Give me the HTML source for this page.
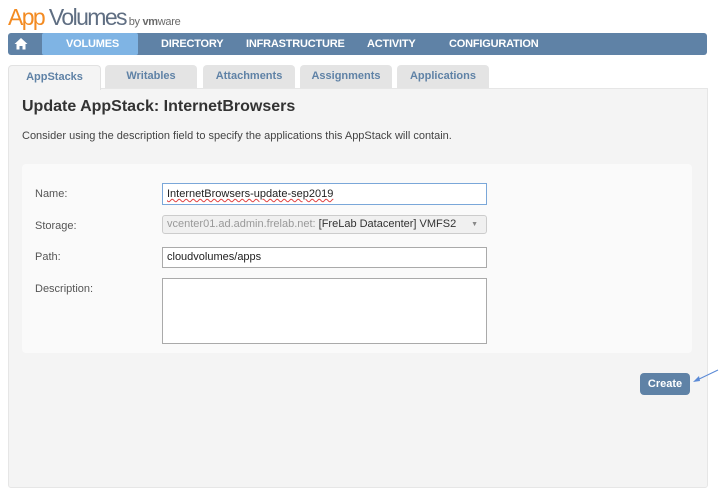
<!DOCTYPE html>
<html><head><style>
body{margin:0;width:719px;height:493px;background:#fff;font-family:"Liberation Sans",sans-serif;position:relative;overflow:hidden}
.a{position:absolute}
.logo{left:8px;top:4px;font-size:23px;letter-spacing:-1.6px}
.nav{left:8px;top:33px;width:699px;height:22px;background:#5f82a6;border-radius:3px}
.nav span{position:absolute;top:5px;color:#fff;font-weight:bold;font-size:11px;letter-spacing:-0.2px}
.tab{top:65px;height:23px;background:#e4e4e4;border-radius:4px 4px 0 0;color:#5f82a6;font-weight:bold;font-size:11px;text-align:center;line-height:23px}
.panel{left:8px;top:88px;width:698px;height:398px;background:#f4f4f4;border:1px solid #e6e6e6;border-radius:0 0 3px 3px}
.lbl{left:35px;font-size:11px;color:#555}
.inp{left:162px;width:325px;border:1px solid #aaa;background:#fff;font-size:11px;color:#222;padding-left:4px;box-sizing:border-box}
</style></head><body>
<div class="a logo"><span style="color:#f38b22">App</span><span style="color:#5f6e82"> Volumes</span><span style="color:#6a6a6a;font-size:11px;letter-spacing:-0.3px"> by <b>vm</b>ware</span></div>
<div class="a nav">
<svg class="a" style="left:6px;top:4px" width="14" height="13" viewBox="0 0 14 13"><path d="M7 1L0.5 7H2.5V12.5H5.5V9H8.5V12.5H11.5V7H13.5Z" fill="#fff"/></svg>
<div class="a" style="left:34px;top:0;width:96px;height:22px;background:#7fb4e4;border-radius:2px"></div>
<span style="left:58px">VOLUMES</span><span style="left:153px">DIRECTORY</span><span style="left:238px">INFRASTRUCTURE</span><span style="left:359px">ACTIVITY</span><span style="left:441px">CONFIGURATION</span>
</div>
<div class="a tab" style="left:8px;width:91px;background:#f4f4f4;border:1px solid #e2e2e2;border-bottom:none;z-index:2;height:24px">AppStacks</div>
<div class="a tab" style="left:105px;width:92px">Writables</div>
<div class="a tab" style="left:203px;width:92px">Attachments</div>
<div class="a tab" style="left:300px;width:92px">Assignments</div>
<div class="a tab" style="left:397px;width:92px">Applications</div>
<div class="a panel"></div>
<div class="a" style="left:22px;top:98px;font-size:16px;font-weight:bold;color:#333">Update AppStack: InternetBrowsers</div>
<div class="a" style="left:22px;top:130px;font-size:11px;color:#444">Consider using the description field to specify the applications this AppStack will contain.</div>
<div class="a" style="left:22px;top:164px;width:670px;height:189px;background:#fafafa;border-radius:4px"></div>
<div class="a lbl" style="top:188px">Name:</div>
<div class="a lbl" style="top:220px">Storage:</div>
<div class="a lbl" style="top:251px">Path:</div>
<div class="a lbl" style="top:283px">Description:</div>
<div class="a inp" style="top:183px;height:22px;line-height:20px;border-color:#7aa7d9;text-decoration:underline wavy #e04040;text-decoration-thickness:1px">InternetBrowsers-update-sep2019</div>
<div class="a inp" style="top:215px;height:19px;line-height:17px;border-radius:3px;background:#f0f0f0;border-color:#ccc;color:#333"><span style="color:#999">vcenter01.ad.admin.frelab.net:</span> [FreLab Datacenter] VMFS2<span style="position:absolute;right:8px;font-size:7px;color:#888">▼</span></div>
<div class="a inp" style="top:247px;height:21px;line-height:19px">cloudvolumes/apps</div>
<div class="a inp" style="top:278px;height:66px"></div>
<div class="a" style="left:640px;top:373px;width:50px;height:22px;background:#5f82a6;border-radius:4px;color:#fff;font-size:11px;font-weight:bold;text-align:center;line-height:22px">Create</div>
<svg class="a" style="left:690px;top:365px" width="29" height="22"><path d="M28 5L5 16" stroke="#5b8ad6" stroke-width="1"/><path d="M3 17L9 11L10 16Z" fill="#5b8ad6"/></svg>
</body></html>
